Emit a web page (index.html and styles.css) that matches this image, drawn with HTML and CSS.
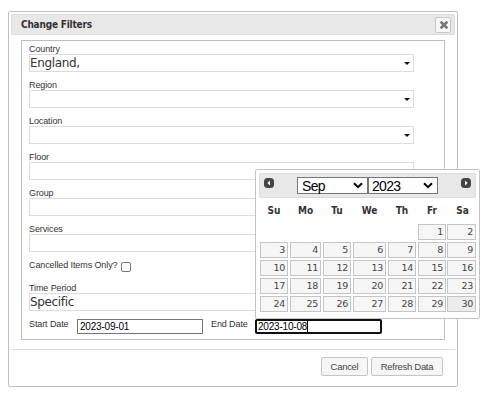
FILE: index.html
```html
<!DOCTYPE html>
<html lang="en">
<head>
<meta charset="utf-8">
<title>Change Filters</title>
<link rel="stylesheet" href="styles.css">
</head>
<body>
<div class="dialog">
  <div class="titlebar"><span class="title">Change Filters</span>
    <button class="close" aria-label="Close"><svg width="8" height="8" viewBox="0 0 8 8"><path d="M1.6 1.6 6.4 6.4M6.4 1.6 1.6 6.4" stroke="#777" stroke-width="2.7" stroke-linecap="square"/></svg></button>
  </div>
  <div class="panel">
    <div class="field"><label>Country</label><div class="combo"><span>England,</span><i class="arrow"></i></div></div>
    <div class="field"><label>Region</label><div class="combo"><i class="arrow"></i></div></div>
    <div class="field"><label>Location</label><div class="combo"><i class="arrow"></i></div></div>
    <div class="field"><label>Floor</label><div class="combo"><i class="arrow"></i></div></div>
    <div class="field"><label>Group</label><div class="combo"><i class="arrow"></i></div></div>
    <div class="field"><label>Services</label><div class="combo"><i class="arrow"></i></div></div>
    <div class="check"><label>Cancelled Items Only?</label><i class="box"></i></div>
    <div class="field"><label>Time Period</label><div class="combo"><span>Specific</span><i class="arrow"></i></div></div>
    <div class="dates">
      <label class="start">Start Date</label><div class="date"><span>2023-09-01</span></div>
      <label class="end">End Date</label><div class="date focus"><span>2023-10-08</span><i class="caret"></i></div>
    </div>
  </div>
  <div class="buttons"><button class="btn cancel"><span>Cancel</span></button><button class="btn refresh"><span>Refresh Data</span></button></div>
</div>
<div class="calendar">
  <div class="cal-head">
    <svg class="prev" width="10" height="10" viewBox="0 0 10 10"><rect width="10" height="10" rx="3.5" fill="#454545"/><path d="M6 2.6V7.4L3.4 5Z" fill="#fff"/></svg>
    <div class="select month"><span>Sep</span><svg width="10" height="7" viewBox="0 0 10 7"><path d="M1 1.2 5 5.2 9 1.2" fill="none" stroke="#000" stroke-width="2"/></svg></div>
    <div class="select year"><span>2023</span><svg width="10" height="7" viewBox="0 0 10 7"><path d="M1 1.2 5 5.2 9 1.2" fill="none" stroke="#000" stroke-width="2"/></svg></div>
    <svg class="next" width="10" height="10" viewBox="0 0 10 10"><rect width="10" height="10" rx="3.5" fill="#454545"/><path d="M4 2.6V7.4L6.6 5Z" fill="#fff"/></svg>
  </div>
  <div class="days names"><b>Su</b><b>Mo</b><b>Tu</b><b>We</b><b>Th</b><b>Fr</b><b>Sa</b></div>
  <div class="days">
    <a class="first">1</a><a class="sat">2</a>
    <a>3</a><a>4</a><a>5</a><a>6</a><a>7</a><a>8</a><a class="sat">9</a>
    <a>10</a><a>11</a><a>12</a><a>13</a><a>14</a><a>15</a><a class="sat">16</a>
    <a>17</a><a>18</a><a>19</a><a>20</a><a>21</a><a>22</a><a class="sat">23</a>
    <a>24</a><a>25</a><a>26</a><a>27</a><a>28</a><a>29</a><a class="sat hover">30</a>
  </div>
</div>
</body>
</html>
```
FILE: styles.css
```css
* { box-sizing: border-box; }
body { margin: 0; padding: 11px 0 0 8px; background: #fff; color: #333; font: 9px/10px "Liberation Sans", Arial, sans-serif; }
.dialog { width: 450px; height: 376px; padding: 2px; border: 1px solid #c0c0c0; border-radius: 2px; }
.titlebar { display: flex; align-items: center; justify-content: space-between; height: 21px; padding: 0 3px 0 9px; border: 1px solid #dcdcdc; border-radius: 2px; background: #e8e8e8; }
.title { font: bold 10px/18px "DejaVu Sans Condensed", "DejaVu Sans", sans-serif; font-stretch: condensed; letter-spacing: -0.2px; white-space: nowrap; }
.close { display: flex; width: 16px; height: 16px; padding: 1px 0 0 1px; align-items: center; justify-content: center; border: 1px solid #c8c8c8; border-radius: 2px; background: #f6f6f6; }
.panel { width: 424px; height: 300px; margin: 5px 0 0 10px; padding: 3px 0 0 7px; border: 1px solid #bdbdbd; }
.field { width: 385px; height: 36px; }
label { display: block; height: 10px; letter-spacing: -0.1px; white-space: nowrap; }
.combo { display: flex; align-items: center; justify-content: space-between; height: 18px; padding: 0 3px 0 0; border: 1px solid #dcdcdc; font: 12px/16px "DejaVu Sans", sans-serif; }
.combo span { letter-spacing: -0.35px; }
.arrow { margin: 1px 0 0 auto; border: 3px solid transparent; border-top-color: #111; border-bottom: 0; }
.check { display: flex; height: 23px; }
.check .box { width: 10px; height: 10px; margin: 2px 0 0 4px; border: 1px solid #767676; border-radius: 2px; }
.dates { display: flex; height: 15px; }
.start { width: 48px; }
.end { width: 44px; }
.date { display: flex; width: 126px; height: 15px; padding-left: 2px; border: 1px solid #767676; color: #000; font-size: 10px; line-height: 14px; letter-spacing: -0.2px; }
.start + .date { margin-right: 8px; }
.focus { width: 127px; padding-left: 1px; border: 2px solid #101010; border-radius: 2px; line-height: 12px; }
.caret { width: 1px; height: 11px; background: #000; }
.buttons { display: flex; gap: 3px; justify-content: flex-end; margin-top: 9px; padding: 7px 12px 0 0; border-top: 1px solid #dcdcdc; }
.btn { height: 19px; padding: 0; border: 1px solid #c5c5c5; border-radius: 2px; background: #f6f6f6; color: #454545; font: 9.5px/16px "Liberation Sans", Arial, sans-serif; letter-spacing: -0.3px; white-space: nowrap; }
.cancel { width: 47px; }
.refresh { width: 72px; }
.calendar { position: absolute; left: 255px; top: 169px; width: 225px; height: 150px; padding: 3px; border: 1px solid #c3c3c3; border-radius: 2px; background: #fff; }
.cal-head { display: flex; height: 25px; padding: 3px 4px 0; border: 1px solid #dcdcdc; border-radius: 2px; background: #e8e8e8; }
.prev { margin: 1px 23px 0 0; }
.next { margin: 1px 0 0 auto; }
.select { display: flex; align-items: center; justify-content: space-between; height: 17px; padding: 0 4px; border: 1px solid #767676; background: #fff; color: #000; font-size: 14px; line-height: 16px; letter-spacing: -0.7px; }
.month { width: 71px; }
.year { width: 70px; padding-left: 3px; }
.days { display: grid; grid-template-columns: 28px 31px 28px 33px 28px 28px 29px; column-gap: 2px; row-gap: 2px; width: 217px; margin-left: 1px; grid-auto-rows: 16px; font: 9.5px/14px "DejaVu Sans", sans-serif; letter-spacing: -0.3px; }
.days a { padding-right: 2px; border: 1px solid #c5c5c5; background: #f6f6f6; color: #454545; text-align: right; }
.days .first { grid-column-start: 6; }
.days .sat { margin: 0 1px 0 -1px; }
.days .hover { background: #ededed; }
.names { height: 26px; padding-top: 6px; font: 10px/14px "DejaVu Sans Condensed", "DejaVu Sans", sans-serif; font-stretch: condensed; letter-spacing: 0; }
.names b { text-align: center; }
```
